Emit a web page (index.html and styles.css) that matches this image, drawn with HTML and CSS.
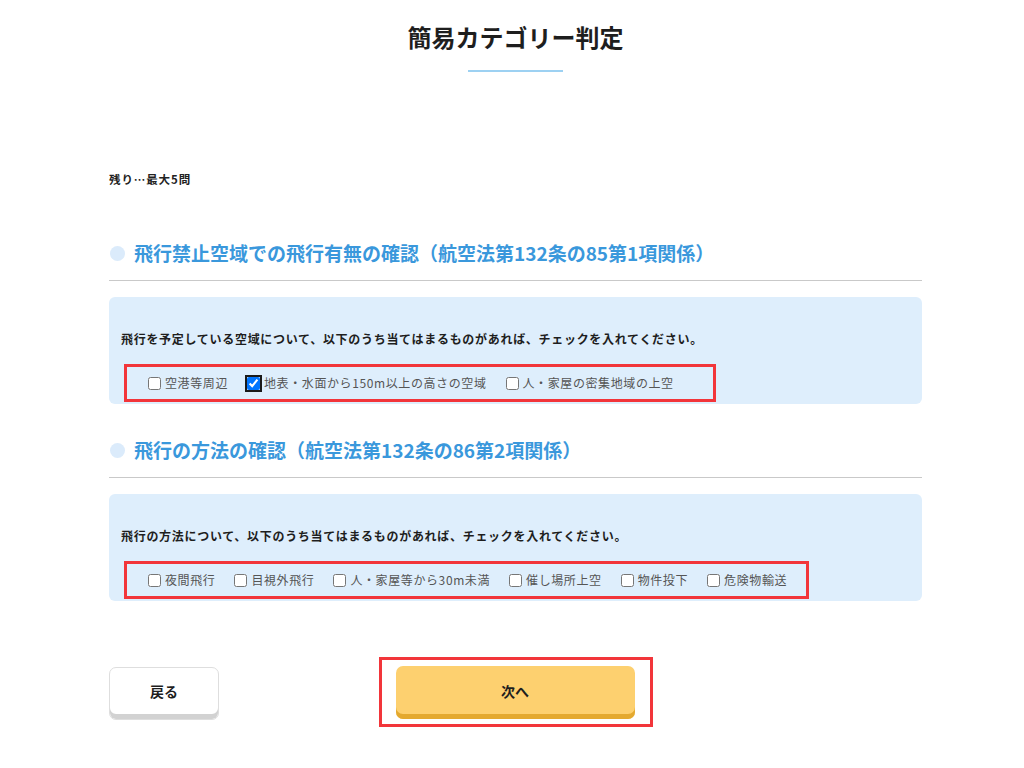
FILE: index.html
```html
<!DOCTYPE html>
<html lang="ja">
<head>
<meta charset="utf-8">
<title>簡易カテゴリー判定</title>
<link rel="stylesheet" href="styles.css">
</head>
<body>
<div class="page">
  <h1 class="title">簡易カテゴリー判定</h1>
  <div class="title-line"></div>

  <p class="remain">残り…最大5問</p>

  <section class="section">
    <h2 class="sec-head"><span class="dot"></span>飛行禁止空域での飛行有無の確認（航空法第132条の85第1項関係）</h2>
    <div class="qbox">
      <p class="qtext">飛行を予定している空域について、以下のうち当てはまるものがあれば、チェックを入れてください。</p>
      <div class="choices choices-wide">
        <label class="choice"><input type="checkbox">空港等周辺</label>
        <label class="choice"><input type="checkbox" class="focused" checked>地表・水面から150m以上の高さの空域</label>
        <label class="choice"><input type="checkbox">人・家屋の密集地域の上空</label>
      </div>
    </div>
  </section>

  <section class="section second">
    <h2 class="sec-head"><span class="dot"></span>飛行の方法の確認（航空法第132条の86第2項関係）</h2>
    <div class="qbox">
      <p class="qtext">飛行の方法について、以下のうち当てはまるものがあれば、チェックを入れてください。</p>
      <div class="choices">
        <label class="choice"><input type="checkbox">夜間飛行</label>
        <label class="choice"><input type="checkbox">目視外飛行</label>
        <label class="choice"><input type="checkbox">人・家屋等から30m未満</label>
        <label class="choice"><input type="checkbox">催し場所上空</label>
        <label class="choice"><input type="checkbox">物件投下</label>
        <label class="choice"><input type="checkbox">危険物輸送</label>
      </div>
    </div>
  </section>

  <div class="actions">
    <button class="btn btn-back" type="button">戻る</button>
    <div class="next-wrap">
      <button class="btn btn-next" type="button">次へ</button>
    </div>
    <div></div>
  </div>
</div>
</body>
</html>
```

FILE: styles.css
```css
* { box-sizing: border-box; }

body {
  margin: 0;
  background: #ffffff;
  color: #222222;
  font-family: "Noto Sans CJK JP", "Noto Sans", sans-serif;
}

.page {
  width: 813px;
  margin: 0 0 0 109px;
}

.title {
  margin: 21px 0 0;
  font-size: 24px;
  line-height: 32px;
  font-weight: 700;
  text-align: center;
  color: #1e1e1e;
  letter-spacing: 0;
}

.title-line {
  width: 95px;
  height: 2px;
  margin: 17px auto 0;
  background: #9dd1f2;
}

.remain {
  margin: 99px 0 0;
  font-size: 11.5px;
  line-height: 16px;
  font-weight: 700;
  letter-spacing: 0.9px;
  color: #222222;
}

.section {
  margin-top: 52px;
}

.section.second {
  margin-top: 32px;
}

.sec-head {
  display: flex;
  align-items: center;
  margin: 0;
  padding: 0 0 13px;
  border-bottom: 1px solid #c9c9c9;
  font-size: 19px;
  line-height: 28px;
  font-weight: 700;
  color: #3a98dc;
}

.dot {
  width: 15px;
  height: 15px;
  margin: 0 9px 0 1px;
  border-radius: 50%;
  background: #dbebfb;
  flex: none;
}

.qbox {
  margin-top: 16px;
  height: 107px;
  padding: 33px 0 2px 12px;
  border-radius: 6px;
  background: #deeefc;
}

.qtext {
  margin: 0;
  font-size: 12px;
  line-height: 18px;
  font-weight: 700;
  letter-spacing: 0.7px;
  color: #1e1e1e;
}

.choices {
  display: inline-flex;
  align-items: center;
  height: 38px;
  margin: 16px 0 0 3px;
  padding: 0 0 0 21px;
  border: 3px solid #f2353a;
}

.choices-wide {
  padding-right: 20px;
}

.choice {
  display: inline-flex;
  align-items: center;
  gap: 4px;
  margin-right: 19px;
  font-size: 12px;
  line-height: 18px;
  letter-spacing: 0.6px;
  color: #555555;
}

.choice input {
  width: 13px;
  height: 13px;
  margin: 0;
}

.choice input.focused {
  outline: 2px solid #1a1a1a;
  outline-offset: 0;
  border-radius: 2px;
}

.actions {
  display: grid;
  grid-template-columns: 1fr auto 1fr;
  align-items: center;
  margin-top: 56px;
}

.btn {
  font-family: "Noto Sans CJK JP", "Noto Sans", sans-serif;
  font-size: 14px;
  font-weight: 700;
  color: #1e1e1e;
  border-radius: 7px;
  cursor: pointer;
}

.btn-back {
  justify-self: start;
  width: 110px;
  height: 53px;
  padding: 0 0 4px;
  background: #ffffff;
  border: 1px solid #dedede;
  box-shadow: inset 0 -5px 0 #d2d2d2;
  margin-top: 2px;
}

.next-wrap {
  padding: 6px 15px 5px 14px;
  border: 3px solid #f2353a;
}

.btn-next {
  display: block;
  width: 239px;
  height: 53px;
  padding: 0 0 4px;
  background: #fdd06f;
  border: none;
  box-shadow: inset 0 -5px 0 #e4a92f;
}
```
